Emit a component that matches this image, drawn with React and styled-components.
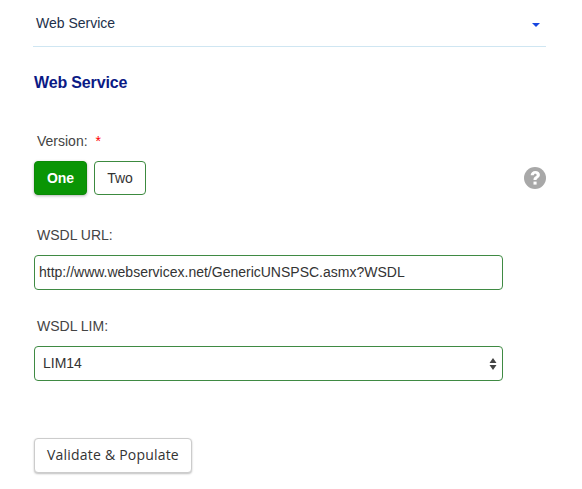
import React from "react";
import styled, { createGlobalStyle } from "styled-components";

const Global = createGlobalStyle`
  html, body { margin: 0; padding: 0; background: #fff; }
  body { font-family: "Liberation Sans", Arial, sans-serif; }
`;

const Page = styled.div`
  width: 582px;
  height: 489px;
  box-sizing: border-box;
  padding: 0 36px 0 34px;
  overflow: hidden;
`;

const Header = styled.div`
  height: 46px;
  margin-left: -1px;
  padding: 0 6px 0 3px;
  box-sizing: content-box;
  border-bottom: 1px solid #cfe6f2;
  display: flex;
  align-items: center;
  justify-content: space-between;
  font-size: 14px;
  color: #22304a;
`;

const Caret = styled.span`
  width: 0;
  height: 0;
  margin-top: 3px;
  border-left: 4px solid transparent;
  border-right: 4px solid transparent;
  border-top: 4px solid #1746e0;
`;

const Title = styled.h2`
  margin: 27px 0 0;
  font-size: 16px;
  line-height: 18px;
  font-weight: 700;
  letter-spacing: -0.15px;
  color: #0b1a85;
`;

const Label = styled.div`
  margin: ${(p) => p.$top}px 0 0 3px;
  font-size: 14px;
  line-height: 16px;
  color: #444;
  display: flex;
  gap: 8px;
`;

const Star = styled.span`
  color: #f00;
`;

const VersionRow = styled.div`
  margin-top: 12px;
  display: flex;
  align-items: center;
  justify-content: space-between;
`;

const Toggle = styled.div`
  display: flex;
  gap: 7px;
`;

const ToggleButton = styled.button`
  width: ${(p) => p.$w}px;
  height: 34px;
  padding: 0;
  border-radius: 4px;
  font-family: inherit;
  font-size: 14px;
  font-weight: ${(p) => (p.$active ? 700 : 400)};
  color: ${(p) => (p.$active ? "#fff" : "#333")};
  background: ${(p) => (p.$active ? "#0a9505" : "#fff")};
  border: 1px solid ${(p) => (p.$active ? "#0a8a05" : "#3c8a3f")};
  box-shadow: ${(p) => (p.$active ? "0 1px 3px rgba(0,0,0,.3)" : "none")};
`;

const Field = styled.div`
  margin-top: 12px;
  width: 469px;
  height: 35px;
  box-sizing: border-box;
  border: 1px solid #3f8a43;
  border-radius: 4px;
  display: flex;
  align-items: center;
  justify-content: space-between;
  padding: 0 5px 1px ${(p) => p.$pad}px;
  font-size: 14px;
  color: #333;
`;

const Arrows = styled.svg`
  display: block;
  margin-top: 1px;
`;

const Submit = styled.button`
  margin-top: 57px;
  width: 158px;
  height: 35px;
  padding: 0 0 2px;
  background: #fff;
  border: 1px solid #ccc;
  border-radius: 4px;
  box-shadow: 0 1px 2px rgba(0,0,0,.25);
  font-family: "Open Sans", sans-serif;
  font-size: 14px;
  letter-spacing: 0.2px;
  color: #333;
`;

export default function App() {
  return (
    <Page>
      <Global />
      <Header>
        <span>Web Service</span>
        <Caret />
      </Header>
      <Title>Web Service</Title>
      <Label $top={41}>
        <span>Version:</span>
        <Star>*</Star>
      </Label>
      <VersionRow>
        <Toggle>
          <ToggleButton $w={53} $active>One</ToggleButton>
          <ToggleButton $w={52}>Two</ToggleButton>
        </Toggle>
        <svg width="22" height="22" viewBox="0 0 22 22">
          <circle cx="11" cy="11" r="11" fill="#a8a8a8" />
          <path d="M6.6 8.2C6.9 5.5 8.7 3.9 11.3 3.9c2.7 0 4.6 1.6 4.6 3.9 0 1.7-.9 2.6-2.1 3.4-1 .6-1.2 1-1.2 1.9H9.5c0-1.8.5-2.7 1.7-3.5 1-.6 1.4-1 1.4-1.7 0-.7-.5-1.2-1.3-1.2-.9 0-1.4.6-1.5 1.6z" fill="#fff" />
          <rect x="9.5" y="14.6" width="3.1" height="3" fill="#fff" />
        </svg>
      </VersionRow>
      <Label $top={32}>WSDL URL:</Label>
      <Field $pad={4}>http://www.webservicex.net/GenericUNSPSC.asmx?WSDL</Field>
      <Label $top={28}>WSDL LIM:</Label>
      <Field $pad={8}>
        <span>LIM14</span>
        <Arrows width="8" height="14" viewBox="0 0 8 14">
          <path d="M4 1 7.5 6H.5zM4 13 .5 8h7z" fill="#444" />
        </Arrows>
      </Field>
      <Submit>Validate &amp; Populate</Submit>
    </Page>
  );
}
